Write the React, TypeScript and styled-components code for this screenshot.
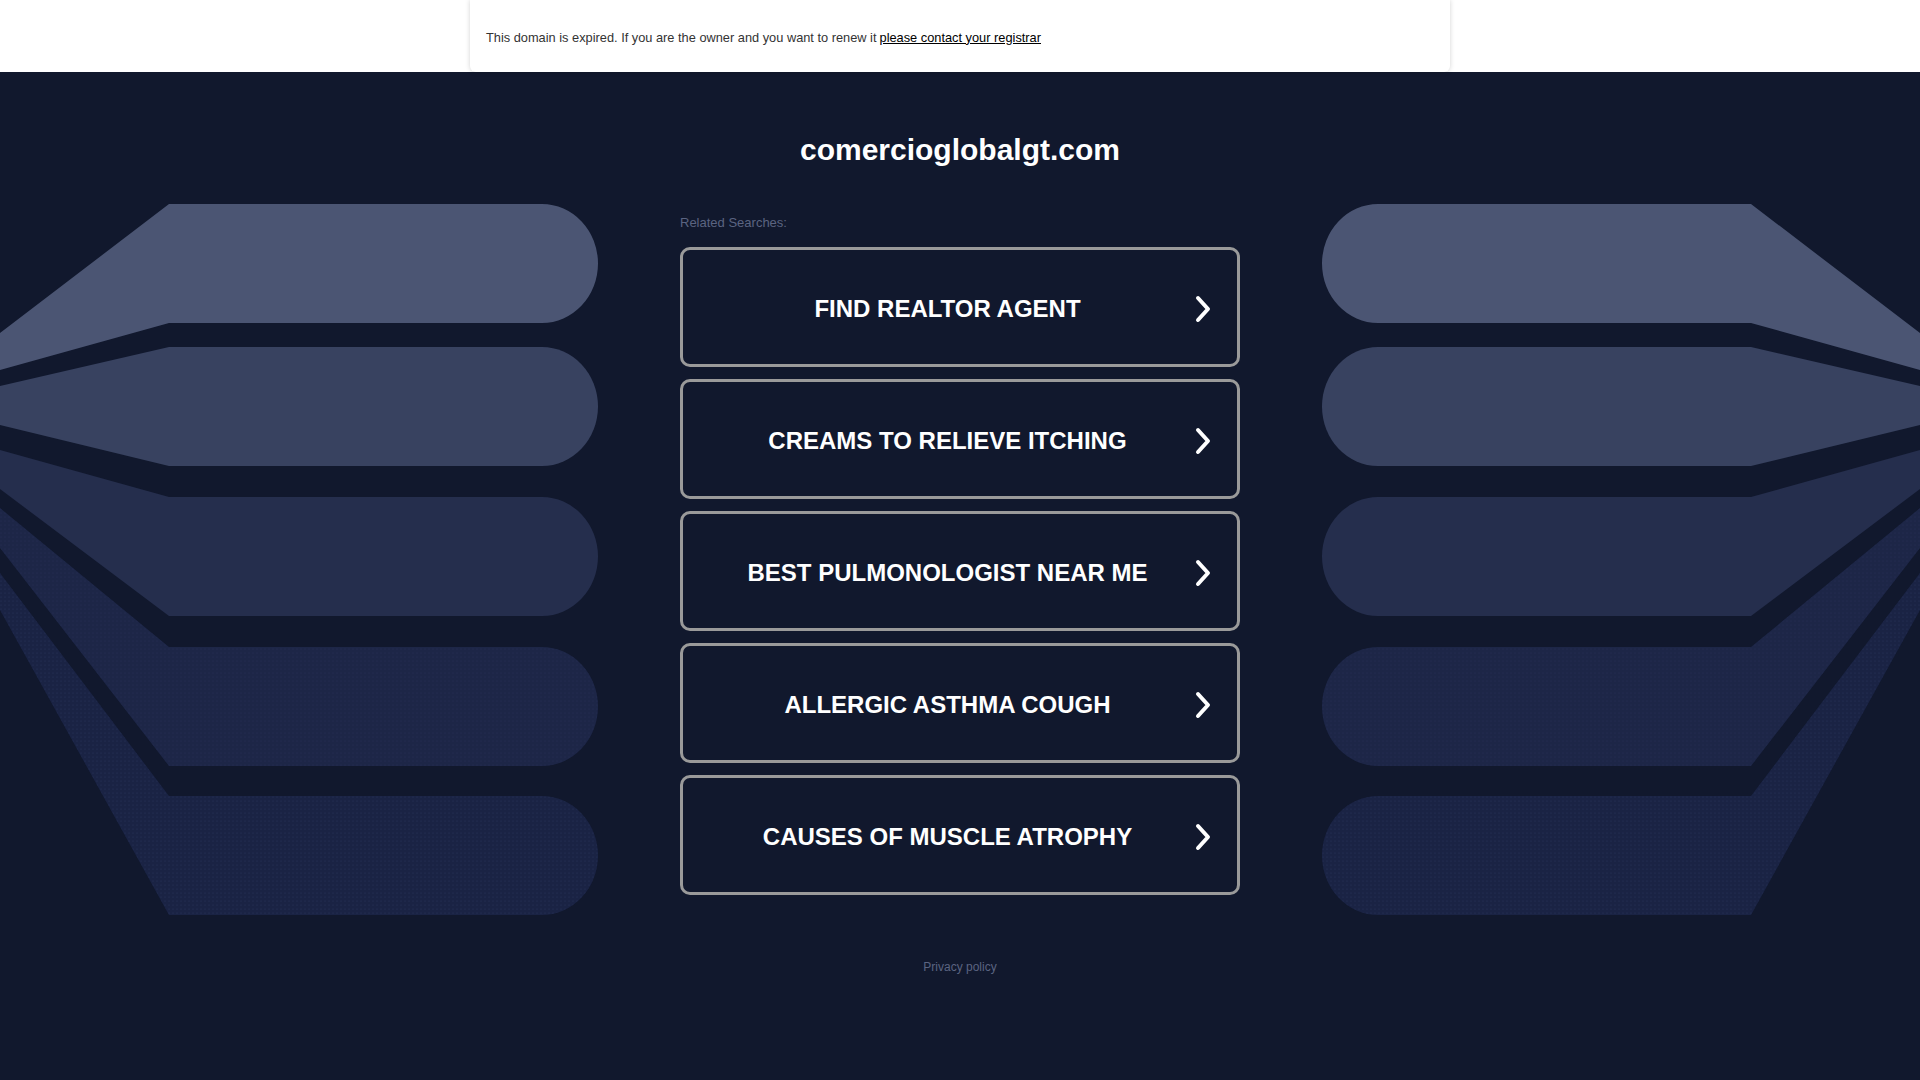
import * as React from 'react'
import styled, { createGlobalStyle } from 'styled-components'

const GlobalStyle = createGlobalStyle`
  html, body {
    margin: 0;
    padding: 0;
    background: #11182d;
    font-family: 'Liberation Sans', Arial, sans-serif;
  }
`

const TopBar = styled.div`
  height: 72px;
  background: #fff;
`

const Notice = styled.div`
  width: 980px;
  height: 72px;
  margin: 0 auto;
  box-sizing: border-box;
  padding: 2px 0 0 16px;
  display: flex;
  align-items: center;
  background: #fff;
  border-radius: 0 0 6px 6px;
  box-shadow: 0 0 5px rgba(0, 0, 0, 0.18);
  font-size: 12.8px;
  color: #333;

  a {
    color: #000;
    text-decoration: underline;
    margin-left: 3px;
  }
`

const Main = styled.div`
  display: grid;
  grid-template-columns: 598px 1fr 598px;
  min-height: calc(100vh - 72px);
`

const Deco = styled.svg<{ $flip?: boolean }>`
  display: block;
  width: 598px;
  height: 900px;
  transform: ${p => (p.$flip ? 'scaleX(-1)' : 'none')};
`

const Content = styled.div`
  display: flex;
  flex-direction: column;
  align-items: center;
  padding-top: 60px;
`

const Title = styled.h1`
  margin: 0;
  font-size: 30px;
  line-height: 36px;
  font-weight: 700;
  color: #fff;
`

const List = styled.div`
  width: 560px;
  margin-top: 47px;
  display: flex;
  flex-direction: column;
  gap: 12px;
`

const Label = styled.div`
  font-size: 13px;
  line-height: 16px;
  color: #5b6481;
  margin-bottom: 4px;
`

const SearchButton = styled.a`
  height: 120px;
  box-sizing: border-box;
  border: 3px solid #9a9a9a;
  border-radius: 10px;
  display: flex;
  align-items: center;
  padding: 3px 26px 0 17px;
  color: #fff;
  text-decoration: none;
  cursor: pointer;
`

const ButtonText = styled.span`
  flex: 1;
  text-align: center;
  font-size: 24px;
  font-weight: 700;
  padding-top: 1px;
`

const Privacy = styled.a`
  margin-top: 65px;
  font-size: 12px;
  line-height: 14px;
  color: #5b6481;
  text-decoration: none;
`

const bands = [
  { t: 204, b: 323, lt: 333, lb: 370, fill: '#4b5573' },
  { t: 347, b: 466, lt: 386, lb: 425, fill: '#384260' },
  { t: 497, b: 616, lt: 450, lb: 489, fill: '#252e4d' },
  { t: 647, b: 766, lt: 508, lb: 548, fill: '#1d2647', dots: 'dotsA' },
  { t: 796, b: 915, lt: 573, lb: 610, fill: '#1a2344', dots: 'dotsB' },
]

const bandPath = (t: number, b: number, lt: number, lb: number) => {
  const r = 56
  const ry = (b - t) / 2
  return `M0,${lt} L169,${t} L${598 - r},${t} A${r} ${ry} 0 0 1 ${598 - r},${b} L169,${b} L0,${lb} Z`
}

const Fan = ({ flip, id }: { flip?: boolean; id: string }) => (
  <Deco $flip={flip} viewBox="0 72 598 900" preserveAspectRatio="none">
    <defs>
      <pattern id={`dotsA${id}`} width="4" height="4" patternUnits="userSpaceOnUse">
        <circle cx="1" cy="1" r="0.55" fill="#263056" />
      </pattern>
      <pattern id={`dotsB${id}`} width="4" height="4" patternUnits="userSpaceOnUse">
        <circle cx="1" cy="1" r="0.6" fill="#27325a" />
      </pattern>
    </defs>
    {bands.map((s, i) => (
      <g key={i}>
        <path d={bandPath(s.t, s.b, s.lt, s.lb)} fill={s.fill} />
        {s.dots && <path d={bandPath(s.t, s.b, s.lt, s.lb)} fill={`url(#${s.dots}${id})`} />}
      </g>
    ))}
  </Deco>
)

const Chevron = () => (
  <svg width="16" height="28" viewBox="0 0 16 28">
    <path d="M3 3 L13 14 L3 25" fill="none" stroke="#fff" strokeWidth="4" strokeLinecap="round" strokeLinejoin="round" />
  </svg>
)

const searches = [
  'FIND REALTOR AGENT',
  'CREAMS TO RELIEVE ITCHING',
  'BEST PULMONOLOGIST NEAR ME',
  'ALLERGIC ASTHMA COUGH',
  'CAUSES OF MUSCLE ATROPHY',
]

export default function App() {
  return (
    <>
      <GlobalStyle />
      <TopBar>
        <Notice>
          This domain is expired. If you are the owner and you want to renew it
          <a href="#">please contact your registrar</a>
        </Notice>
      </TopBar>
      <Main>
        <div>
          <Fan id="L" />
        </div>
        <Content>
          <Title>comercioglobalgt.com</Title>
          <List>
            <Label>Related Searches:</Label>
            {searches.map(s => (
              <SearchButton key={s}>
                <ButtonText>{s}</ButtonText>
                <Chevron />
              </SearchButton>
            ))}
          </List>
          <Privacy href="#">Privacy policy</Privacy>
        </Content>
        <div>
          <Fan id="R" flip />
        </div>
      </Main>
    </>
  )
}
